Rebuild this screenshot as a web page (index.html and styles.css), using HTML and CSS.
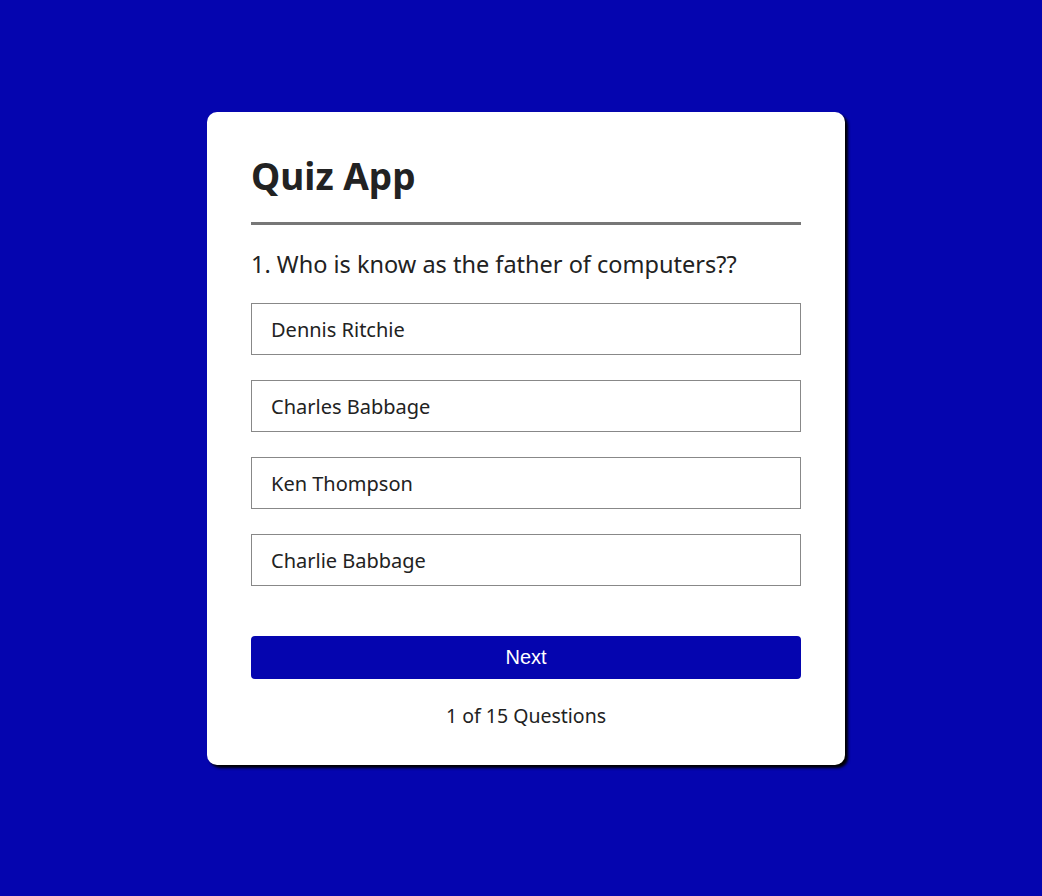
FILE: index.html
```html
<!DOCTYPE html>
<html>
<head>
<meta charset="utf-8">
<link rel="stylesheet" href="styles.css">
</head>
<body>
<div class="page">
  <div class="card">
    <h1 class="title">Quiz App</h1>
    <div class="quiz">
      <h2 class="question">1. Who is know as the father of computers??</h2>
      <div class="answers">
        <button class="answer">Dennis Ritchie</button>
        <button class="answer">Charles Babbage</button>
        <button class="answer">Ken Thompson</button>
        <button class="answer">Charlie Babbage</button>
      </div>
      <button class="next">Next</button>
      <p class="count">1 of 15 Questions</p>
    </div>
  </div>
</div>
</body>
</html>
```

FILE: styles.css
```css
* { box-sizing: border-box; }
html, body { margin: 0; padding: 0; }
body {
  background: #0505af;
  font-family: "Noto Sans", sans-serif;
  color: #222;
}
.page {
  min-height: 896px;
  display: flex;
  justify-content: center;
  align-items: flex-start;
  padding: 112px 0 0 10px;
}
.card {
  width: 638px;
  height: 653px;
  background: #fff;
  border-radius: 10px;
  box-shadow: 3px 3px 3px #000;
  padding: 38px 44px 0;
}
.title {
  margin: 0;
  font-size: 37px;
  line-height: 52px;
  font-weight: 700;
  color: #222;
  padding-bottom: 20px;
  border-bottom: 3px solid #777;
}
.quiz { padding-top: 18px; }
.question {
  margin: 0;
  font-size: 23.5px;
  font-weight: 400;
  line-height: 42px;
  color: #222;
}
.answers {
  display: flex;
  flex-direction: column;
  gap: 25px;
  margin-top: 18px;
}
.answer {
  height: 52px;
  background: #fff;
  border: 1px solid #888;
  text-align: left;
  padding: 0 19px;
  font-family: "Noto Sans", sans-serif;
  font-size: 20px;
  color: #222;
}
.next {
  display: block;
  width: 100%;
  height: 43px;
  margin-top: 50px;
  background: #0505af;
  color: #fff;
  border: none;
  border-radius: 4px;
  font-family: "Liberation Sans", Arial, sans-serif;
  font-size: 20px;
}
.count {
  margin: 24px 0 0;
  text-align: center;
  font-size: 19.5px;
  line-height: 26px;
}
```
